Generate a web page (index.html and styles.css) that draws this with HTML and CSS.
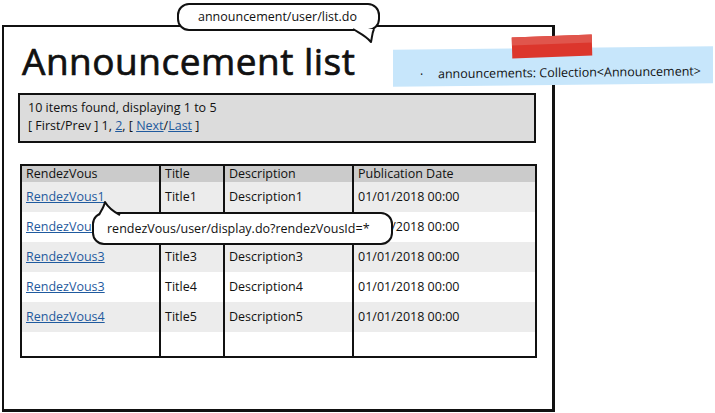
FILE: index.html
```html
<!DOCTYPE html>
<html>
<head>
<meta charset="utf-8">
<link rel="stylesheet" href="styles.css">
</head>
<body>
<div class="frame">
  <h1 class="title">Announcement list</h1>
  <div class="pager">
    <div>10 items found, displaying 1 to 5</div>
    <div>[ First/Prev ] 1, <a class="lnk">2</a>, [ <a class="lnk">Next</a>/<a class="lnk">Last</a> ]</div>
  </div>
  <div class="table">
    <div class="col c1">
      <div class="cell head">RendezVous</div>
      <div class="cell odd"><a class="lnk">RendezVous1</a></div>
      <div class="cell"><a class="lnk">RendezVous2</a></div>
      <div class="cell odd"><a class="lnk">RendezVous3</a></div>
      <div class="cell"><a class="lnk">RendezVous3</a></div>
      <div class="cell odd"><a class="lnk">RendezVous4</a></div>
    </div>
    <div class="col c2">
      <div class="cell head">Title</div>
      <div class="cell odd">Title1</div>
      <div class="cell">Title2</div>
      <div class="cell odd">Title3</div>
      <div class="cell">Title4</div>
      <div class="cell odd">Title5</div>
    </div>
    <div class="col c3">
      <div class="cell head">Description</div>
      <div class="cell odd">Description1</div>
      <div class="cell">Description2</div>
      <div class="cell odd">Description3</div>
      <div class="cell">Description4</div>
      <div class="cell odd">Description5</div>
    </div>
    <div class="col c4">
      <div class="cell head">Publication Date</div>
      <div class="cell odd">01/01/2018 00:00</div>
      <div class="cell">01/01/2018 00:00</div>
      <div class="cell odd">01/01/2018 00:00</div>
      <div class="cell">01/01/2018 00:00</div>
      <div class="cell odd">01/01/2018 00:00</div>
    </div>
  </div>
</div>

<div class="bubble bubble-url">announcement/user/list.do
  <svg class="tail tail-url" width="30" height="16" viewBox="0 0 30 16"><path d="M2 0 C 8 4, 14 6, 20 13 C 21 9, 21 4, 23 0" fill="#fff" stroke="#111" stroke-width="2" stroke-linejoin="round"/></svg>
</div>

<div class="sticky">
  <div class="tape"><div class="tape-hi"></div></div>
  <span class="dot">·</span><span>announcements: Collection&lt;Announcement&gt;</span>
</div>

<div class="bubble bubble-link">rendezVous/user/display.do?rendezVousId=*
  <svg class="tail tail-link" width="28" height="14" viewBox="0 0 28 14"><path d="M3 14 C 5 10, 8 6, 9 1 C 12 6, 16 10, 24 14" fill="#fff" stroke="#111" stroke-width="2" stroke-linejoin="round"/></svg>
</div>
</body>
</html>
```

FILE: styles.css
```css
* { box-sizing: border-box; }
body {
  margin: 0;
  background: #fff;
  font-family: "Open Sans", "Liberation Sans", sans-serif;
  font-size: 12.5px;
  color: #111;
  width: 715px;
  height: 413px;
  overflow: hidden;
  position: relative;
}
.frame {
  margin: 25px 0 0 2px;
  width: 553px;
  height: 387px;
  border: 2px solid #111;
  border-right-width: 3px;
  border-bottom-width: 3px;
  padding: 14px 0 0 14px;
}
.title {
  margin: 0;
  font-family: "Open Sans", sans-serif;
  font-weight: 400;
  font-size: 37px;
  line-height: 40px;
  padding-left: 4px;
  letter-spacing: 0.5px;
  -webkit-text-stroke: 0.7px #111;
}
.pager {
  margin-top: 12px;
  width: 518px;
  height: 50px;
  background: #dcdcdc;
  border: 2px solid #111;
  padding: 4px 8px;
  line-height: 18px;
}
.lnk {
  color: #1f5a9e;
  text-decoration: underline;
}
.table {
  margin: 21px 0 0 2px;
  width: 517px;
  height: 194px;
  border: 2px solid #111;
  display: flex;
}
.col { display: flex; flex-direction: column; }
.col + .col { border-left: 2px solid #111; }
.c1 { width: 137px; }
.c2 { width: 64px; }
.c3 { width: 129px; }
.c4 { flex: 1; }
.cell {
  height: 30px;
  line-height: 30px;
  padding-left: 4px;
  white-space: nowrap;
}
.cell.head {
  height: 16px;
  line-height: 16px;
  background: #cbcbcb;
}
.cell.odd { background: #ececec; }

.bubble {
  position: absolute;
  background: #fff;
  border: 2px solid #111;
  border-radius: 12px;
  white-space: nowrap;
}
.bubble-url {
  left: 177px;
  top: 3px;
  width: 203px;
  height: 28px;
  line-height: 24px;
  padding-left: 19px;
}
.tail { position: absolute; overflow: visible; }
.tail-url { left: 172px; top: 24px; }
.bubble-link {
  left: 92px;
  top: 212px;
  width: 301px;
  height: 33px;
  line-height: 29px;
  padding-left: 13px;
}
.tail-link { left: 2px; top: -13px; }

.sticky {
  position: absolute;
  left: 393px;
  top: 48px;
  width: 320px;
  height: 37px;
  background: #c7e6fb;
  transform: skewY(-0.6deg);
  padding: 17px 0 0 27px;
  line-height: 16px;
  white-space: nowrap;
}
.sticky .dot { display: inline-block; width: 18px; }
.tape {
  position: absolute;
  left: 119px;
  top: -12px;
  width: 80px;
  height: 21px;
  background: #dc362c;
  transform: rotate(-1.5deg);
}
.tape-hi {
  height: 8px;
  background: #e0554c;
}
```
